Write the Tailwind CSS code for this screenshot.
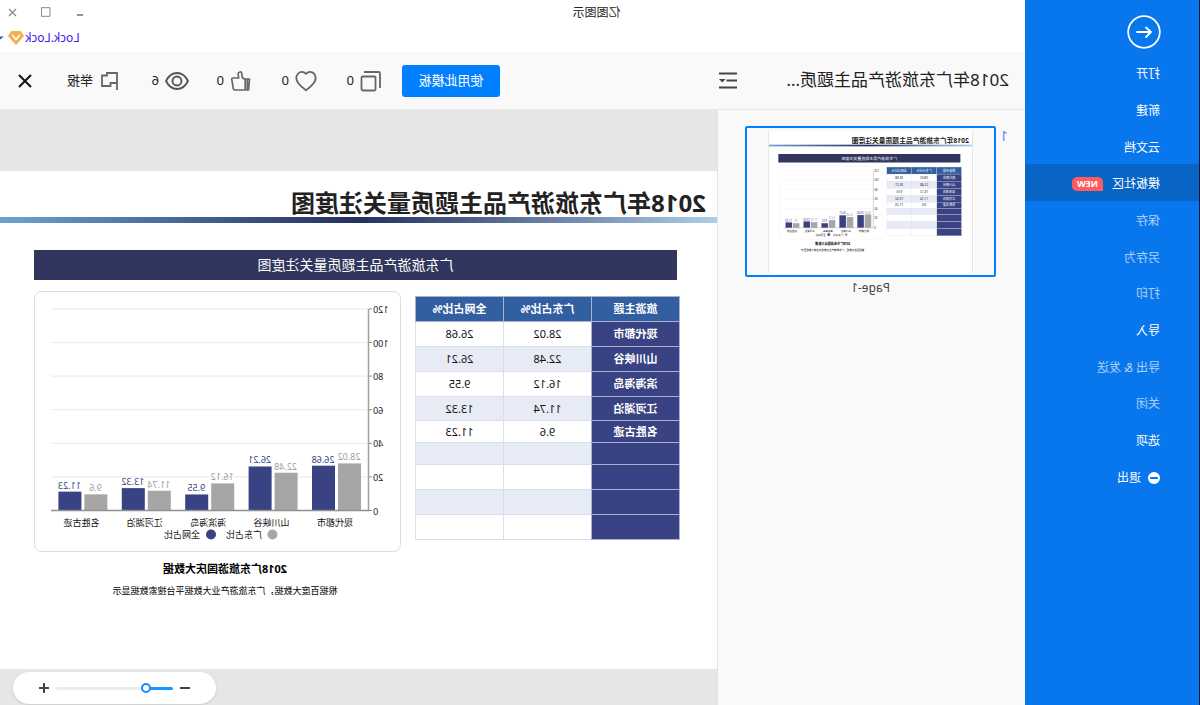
<!DOCTYPE html>
<html lang="zh-CN">
<head>
<meta charset="utf-8">
<title>亿图图示</title>
<script src="https://cdn.jsdelivr.net/npm/@tailwindcss/browser@4"></script>
</head>
<body class="bg-white">
<!-- The whole window is shown flipped left to right -->
<div class="-scale-x-100 flex h-screen overflow-hidden bg-white font-['Noto_Sans','Noto_Sans_CJK_SC',sans-serif] text-xs text-[#222]">

  <aside class="flex w-[175px] shrink-0 flex-col border-l border-[#04183a] bg-[#0876ec] text-white">
    <button aria-label="返回" class="ml-[38px] mt-[15px] size-[34px] shrink-0">
      <svg viewBox="0 0 34 34" class="size-full" fill="none" stroke="#fff" stroke-width="1.8"><circle cx="17" cy="17" r="15.8"/><path d="M24 17H10M15 12.500 10 17l5 5" stroke-linecap="round" stroke-linejoin="round"/></svg>
    </button>
    <nav class="mt-[5px] flex h-[440px] flex-col leading-4 *:flex *:flex-1 *:items-center *:pl-[39px] *:pt-1">
      <a href="#">打开</a>
      <a href="#">新建</a>
      <a href="#">云文档</a>
      <a href="#" class="bg-[#0865c6]">模板社区<span class="ml-[9px] rounded-[5px] rounded-bl-none bg-[#ff5a60] px-[5px] text-[9px] font-bold leading-[14px]">NEW</span></a>
      <a href="#" class="text-white/65">保存</a>
      <a href="#" class="text-white/65">另存为</a>
      <a href="#" class="text-white/65">打印</a>
      <a href="#">导入</a>
      <a href="#" class="text-white/65">导出 &amp; 发送</a>
      <a href="#" class="text-white/65">关闭</a>
      <a href="#">选项</a>
      <a href="#" class="gap-[7px]"><svg viewBox="0 0 12 12" class="size-3"><circle cx="6" cy="6" r="6" fill="#fff"/><rect x="2" y="5" width="8" height="2" rx=".6" fill="#0876ec"/></svg>退出</a>
    </nav>
  </aside>

  <div class="flex min-w-0 flex-1 flex-col">
    <header class="flex h-[52px] shrink-0 flex-col">
      <div class="flex h-6 items-center">
        <div class="flex-1"></div>
        <h1 class="pr-[161px] pt-px">亿图图示</h1>
        <div class="flex flex-1 items-center justify-end gap-6 pr-[7px] text-[#888] *:size-[10px]">
          <button aria-label="最小化"><svg viewBox="0 0 10 10" class="size-full"><path d="M2 8h6" stroke="currentColor" stroke-width="1.800"/></svg></button>
          <button aria-label="最大化"><svg viewBox="0 0 10 10" class="size-full"><path d="M1 .7h8.500v8.600H1z" fill="none" stroke="currentColor"/></svg></button>
          <button aria-label="关闭窗口"><svg viewBox="0 0 10 10" class="size-full"><path d="m1 2 7 7M8 2 1 9" fill="none" stroke="currentColor" stroke-width="1.200"/></svg></button>
        </div>
      </div>
      <div class="flex h-7 items-center justify-end">
        <a href="#" class="flex items-center gap-px text-[#3c1bef]">Lock.Lock
          <svg viewBox="0 0 16 14" class="h-[14px] w-4"><path d="M3.500.5h9L15.500 5 8 13.500.5 5z" fill="#f3b04b" stroke="#f3b04b" stroke-linejoin="round"/><path d="M4.800 4.500 8 8.500l3.200-4" fill="none" stroke="#fff" stroke-width="1.800" stroke-linecap="round" stroke-linejoin="round"/></svg>
          <svg viewBox="0 0 4 4" class="ml-[3px] size-1"><path d="M0 .5h4v3z" fill="#1460b0"/></svg>
        </a>
      </div>
    </header>

    <div class="flex h-[58px] shrink-0 items-center border-b border-[#e8e8e8] bg-[#f9f9f9] text-[13px]">
      <div class="flex w-[308px] items-center justify-between pl-4">
        <h2 class="whitespace-nowrap text-[17px] text-[#222]">2018年广东旅游产品主题质...</h2>
        <button aria-label="目录" class="mr-px"><svg viewBox="0 0 20 18" class="h-[18px] w-5" fill="none" stroke="#444" stroke-width="2"><path d="M1 1.500h18M1 8.500h10.500M1 15.500h18"/><path d="M12.500 7h6.500l-3.300 3.500z" fill="#444" stroke="none"/></svg></button>
      </div>
      <div class="flex flex-1 items-center justify-end pr-[17px]">
        <button class="mr-5 h-8 w-[98px] rounded-[3px] bg-[#0080ff] text-white">使用此模板</button>
        <button class="flex w-[65px] items-center gap-[6px]"><svg viewBox="0 0 22 22" class="size-[22px]" fill="none" stroke="#666" stroke-width="1.800"><path d="M7.500 6.500H19A1.500 1.500 0 0 1 20.500 8v11a1.500 1.500 0 0 1-1.500 1.500H8A1.500 1.500 0 0 1 6.500 19V7.500a1 1 0 0 1 1-1z"/><path d="M2 18V3.500A1.500 1.500 0 0 1 3.500 2H18"/></svg>0</button>
        <button class="flex w-[65px] items-center gap-[6px]"><svg viewBox="0 0 22 22" class="size-[22px]" fill="none" stroke="#666" stroke-width="1.800" stroke-linejoin="round"><path d="M11 3.800C8.800 1.200 5 1.300 3 3.700.8 6.400 1 10 3.200 13c2 2.700 4.800 5.200 7.800 7.300 3-2.100 5.800-4.600 7.800-7.300 2.200-3 2.400-6.600.2-9.300-2-2.400-5.800-2.500-8 .1z"/></svg>0</button>
        <button class="flex w-[63px] items-center gap-[6px]"><svg viewBox="0 0 22 22" class="size-[22px]" fill="none" stroke="#666" stroke-width="1.700" stroke-linejoin="round"><path d="M2.500 9h4.300v11H3.500L2.500 9zM6.800 9.500 9.500 7.800c.8-1.500.4-3.500.9-5 .4-1.400 3.100-1.100 3.400.8.2 1.500-.3 3-.5 4.400h5.700c.8 0 1.300.6 1.200 1.400l-1.500 9.300c-.1.800-.6 1.300-1.400 1.300H6.800M4.700 9v11"/></svg>0</button>
        <button class="flex w-[70px] items-center gap-[6px]"><svg viewBox="0 0 24 22" class="h-[22px] w-6" fill="none" stroke="#555" stroke-width="1.900" stroke-linejoin="round"><path d="M1 11C3.500 6 7 3 12 3s8.500 3 11 8c-2.500 5-6 8-11 8S3.500 16 1 11z"/><circle cx="12" cy="11" r="4.500"/></svg>6</button>
        <button class="flex w-[86px] items-center gap-[8px]"><svg viewBox="0 0 18 20" class="h-5 w-[18px]" fill="none" stroke="#666" stroke-width="1.800"><path d="M2 19V2h10v2.500h5V15H8.500v-3H2"/></svg>举报</button>
        <button aria-label="关闭"><svg viewBox="0 0 16 16" class="size-4" fill="none" stroke="#111" stroke-width="2"><path d="m2 2 12 12M14 2 2 14"/></svg></button>
      </div>
    </div>

    <div class="flex min-h-0 flex-1">
      <section class="flex w-[308px] shrink-0 border-r border-[#e4e4e4] bg-[#f9f9f9] pl-[17px] pt-4" aria-label="页面">
        <span class="mr-1 text-sm leading-5 text-[#5b8cff]">1</span>
        <div>
          <button aria-label="Page-1" class="flex h-[151px] w-[251px] items-center justify-center rounded-[2px] border-2 border-[#0080ff]">
            <svg id="thumb" viewBox="0 0 717 497" class="h-[142px] w-[205px] border-x border-[#e6e6e6] bg-white">
              <text x="11" y="41" font-size="24" font-weight="700" fill="#222">2018年广东旅游产品主题质量关注度图</text>
              <rect y="46" width="717" height="6" fill="url(#rule)"/>
              <rect x="41" y="79" width="643" height="30" fill="#30365d"/>
              <text x="363" y="99" font-size="14" fill="#fff" text-anchor="middle">广东旅游产品主题质量关注度图</text>
              <g id="thumbTable"></g>
              <use href="#chart" x="316" y="120" width="367" height="261"/>
              <text x="492" y="401" font-size="11" font-weight="700" text-anchor="middle">2018广东旅游国庆大数据</text>
              <text x="492" y="423" font-size="9" text-anchor="middle">根据百度大数据，广东旅游产业大数据平台搜索数据显示</text>
            </svg>
          </button>
          <p class="mt-[2px] text-center text-[12px] leading-[18px] text-[#444]">Page-1</p>
        </div>
      </section>

      <main class="relative min-w-0 flex-1 bg-[#e6e6e6] pt-[61px]">
        <article class="h-[498px] bg-white text-[#111]">
          <h2 class="whitespace-nowrap pl-[11px] pt-[18px] text-2xl font-bold leading-7 text-[#222]">2018年广东旅游产品主题质量关注度图</h2>
          <div class="h-[6px] bg-linear-to-r from-[#b0cfe6] via-[#25305f] via-50% to-[#6da3cf]"></div>
          <div class="pl-[37px] pr-[34px]">
            <h3 class="ml-[3px] mt-[27px] bg-[#30365d] text-center text-sm leading-[30px] text-white">广东旅游产品主题质量关注度图</h3>
            <div class="flex justify-between pt-[11px]">
              <table class="mt-[5px] w-[265px] table-fixed border-collapse self-start text-center text-[11px] leading-4 [&_td]:border [&_td]:border-[#dcdfe6] [&_td]:p-0 [&_th]:border [&_th]:border-[#aab2d2] [&_th]:p-0">
                <thead><tr class="h-[25px] bg-[#325f9f] text-white"><th>旅游主题</th><th>广东占比%</th><th>全网占比%</th></tr></thead>
                <tbody class="[&_th]:bg-[#394282] [&_th]:text-white [&>tr:nth-child(even)]:bg-[#e7ebf6]">
                  <tr class="h-[25px]"><th>现代都市</th><td>28.02</td><td>26.68</td></tr>
                  <tr class="h-[25px]"><th>山川峡谷</th><td>22.48</td><td>26.21</td></tr>
                  <tr class="h-[25px]"><th>滨海海岛</th><td>16.12</td><td>9.55</td></tr>
                  <tr class="h-[24px]"><th>江河湖泊</th><td>11.74</td><td>13.32</td></tr>
                  <tr class="h-[22px]"><th>名胜古迹</th><td>9.6</td><td>11.23</td></tr>
                  <tr class="h-[22px]"><th></th><td></td><td></td></tr>
                  <tr class="h-[25px]"><th></th><td></td><td></td></tr>
                  <tr class="h-[25px]"><th></th><td></td><td></td></tr>
                  <tr class="h-[25px]"><th></th><td></td><td></td></tr>
                </tbody>
              </table>
              <figure class="w-[367px]">
                <svg viewBox="0 0 367 261" class="h-[261px] w-full"><use href="#chart" width="367" height="261"/></svg>
                <figcaption class="flex flex-col items-center whitespace-nowrap pr-[15px] text-black">
                  <strong class="mt-[7px] text-[11px] leading-5">2018广东旅游国庆大数据</strong>
                  <span class="mt-1 text-[9px] leading-4">根据百度大数据，广东旅游产业大数据平台搜索数据显示</span>
                </figcaption>
              </figure>
            </div>
          </div>
        </article>

        <div class="absolute bottom-px right-[13px] flex h-[32px] w-[203px] items-center rounded-full bg-white px-[25px] shadow-sm">
          <button aria-label="缩小"><svg viewBox="0 0 12 12" class="size-3"><path d="M1 6h10" stroke="#444" stroke-width="2"/></svg></button>
          <input type="range" aria-label="缩放" min="0" max="100" value="21" class="mx-[6px] h-[10px] min-w-0 flex-1 appearance-none bg-transparent [&::-webkit-slider-runnable-track]:h-[3px] [&::-webkit-slider-runnable-track]:rounded-full [&::-webkit-slider-runnable-track]:bg-[linear-gradient(90deg,#1296ff_23%,#ececec_23%)] [&::-webkit-slider-thumb]:-mt-[4px] [&::-webkit-slider-thumb]:size-[10px] [&::-webkit-slider-thumb]:appearance-none [&::-webkit-slider-thumb]:rounded-full [&::-webkit-slider-thumb]:border-2 [&::-webkit-slider-thumb]:border-[#1a8cff] [&::-webkit-slider-thumb]:bg-white">
          <button aria-label="放大"><svg viewBox="0 0 12 12" class="size-3"><path d="M1 6h10M6 1v10" stroke="#444" stroke-width="2"/></svg></button>
        </div>
      </main>
    </div>
  </div>
</div>

<svg width="0" height="0" class="absolute">
  <defs>
    <linearGradient id="rule"><stop offset="0" stop-color="#b0cfe6"/><stop offset=".5" stop-color="#25305f"/><stop offset="1" stop-color="#6da3cf"/></linearGradient>
    <symbol id="chart" viewBox="0 0 367 261">
      <rect x=".5" y=".5" width="366" height="260" rx="7" fill="#fff" stroke="#dcdcdc"/>
      <g id="plot" font-size="9" class="font-['Noto_Sans','Noto_Sans_CJK_SC',sans-serif]"></g>
    </symbol>
  </defs>
</svg>

<script>
const rows = [['现代都市', 28.02, 26.68], ['山川峡谷', 22.48, 26.21], ['海滨海岛', 16.12, 9.55], ['江河湖泊', 11.74, 13.32], ['名胜古迹', 9.6, 11.23]];
const base = 219.5, unit = 1.68, left = 32;
let s = '';
for (let v = 0; v <= 120; v += 20) {
  const y = base - v * unit;
  if (v) s += `<path d="M${left} ${y}H350" stroke="#eee" stroke-width="1.300"/>`;
  s += `<path d="M${left - 3} ${y}h3" stroke="#888"/><text x="${left - 4}" y="${y + 4}" text-anchor="end" fill="#222">${v}</text>`;
}
rows.forEach(([name, a, b], i) => {
  const x = left + i * 63.4;
  s += `<rect x="${x + 8}" y="${base - a * unit}" width="23" height="${a * unit}" fill="#a7a5a6"/>`;
  s += `<text x="${x + 20}" y="${base - a * unit - 3}" text-anchor="middle" fill="#a09ea0">${a}</text>`;
  s += `<rect x="${x + 34}" y="${base - b * unit}" width="23" height="${b * unit}" fill="#394282"/>`;
  s += `<text x="${x + 46}" y="${base - b * unit - 3}" text-anchor="middle" fill="#394282">${b}</text>`;
  s += `<text x="${x + 34}" y="235" text-anchor="middle" fill="#111">${name}</text>`;
});
s += `<path d="M${left + .5} 18V220" stroke="#a0a0a0" stroke-width="1.500"/><path d="M${left} 219.5H350" stroke="#909090" stroke-width="1.300"/>`;
s += `<circle cx="128.500" cy="243.500" r="5" fill="#a7a5a6"/><text x="139" y="247" fill="#111">广东占比</text><circle cx="190" cy="243.500" r="5" fill="#394282"/><text x="201" y="247" fill="#111">全网占比</text>`;
document.getElementById('plot').innerHTML = s;

const heights = [25, 25, 25, 25, 24, 22, 22, 25, 25, 25];
const lines = [['旅游主题', '广东占比%', '全网占比%'], ['现代都市', '28.02', '26.68'], ['山川峡谷', '22.48', '26.21'], ['滨海海岛', '16.12', '9.55'], ['江河湖泊', '11.74', '13.32'], ['名胜古迹', '9.6', '11.23']];
let t = '', y = 125;
heights.forEach((h, r) => {
  for (let c = 0; c < 3; c++) {
    const fill = r === 0 ? '#325f9f' : c === 0 ? '#394282' : r % 2 ? '#fff' : '#e7ebf6';
    const x = 37 + c * 88;
    t += `<rect x="${x}" y="${y}" width="88" height="${h}" fill="${fill}" stroke="#d6dae6"/>`;
    if (lines[r]) t += `<text x="${x + 44}" y="${y + h / 2 + 4}" font-size="11" text-anchor="middle" fill="${r && c ? '#222' : '#fff'}">${lines[r][c]}</text>`;
  }
  y += h;
});
document.getElementById('thumbTable').innerHTML = t;
</script>
</body>
</html>
